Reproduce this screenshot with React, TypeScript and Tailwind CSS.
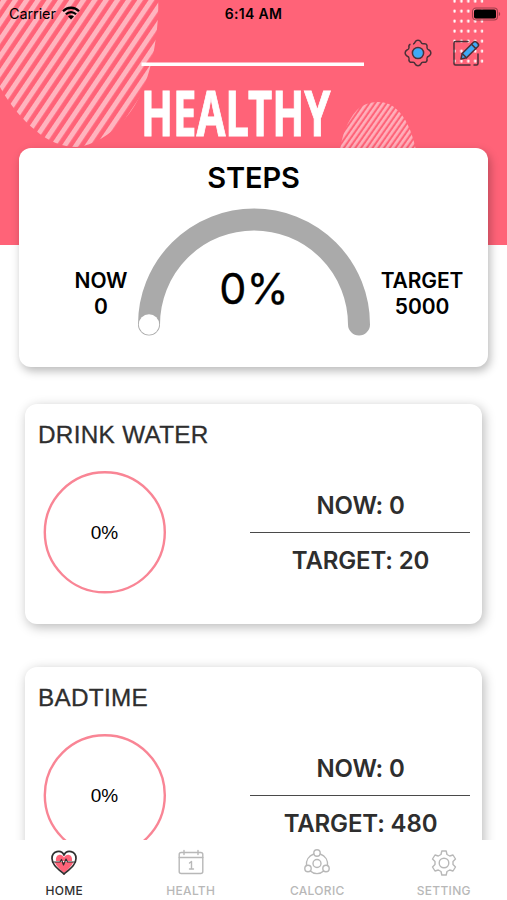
import type { ReactNode } from "react";

function HeaderArt() {
  return (
    <svg className="absolute left-0 top-0" width="507" height="245" viewBox="0 0 507 245" fill="none">
      <defs>
        <pattern id="wide" width="9.4" height="9.4" patternUnits="userSpaceOnUse" patternTransform="translate(61.5 146) rotate(34)">
          <rect width="4.9" height="9.4" fill="#ffb4be" />
        </pattern>
        <pattern id="thin" width="4.7" height="4.7" patternUnits="userSpaceOnUse" patternTransform="translate(345 148) rotate(35)">
          <rect width="2.6" height="4.7" fill="#ffb0bb" />
        </pattern>
        <pattern id="dots" x="452.8" y="-1" width="6.9" height="10" patternUnits="userSpaceOnUse">
          <rect x="0.6" y="0.6" width="2.2" height="3.2" rx="1" fill="#fff" />
        </pattern>
      </defs>
      <rect width="507" height="245" fill="#ff6378" />
      <path d="M-2 -2V83C7 102 22 119 35 130C49 142 63 147 76 147C94 146 110 134 123 121C141 102 149 76 154 50C157 34 159 13 158 -2Z" fill="url(#wide)" />
      <path d="M340 150C342 136 347 121 357 110C366 101 384 99 394 107C406 116 412 132 416 150Z" fill="url(#thin)" />
      <rect x="452.8" y="-1" width="30.6" height="66" fill="url(#dots)" />
      <path d="M141.500 64.300H364" stroke="#fff" strokeWidth="3.600" />
    </svg>
  );
}

function StatusBar() {
  return (
    <div className="flex h-7 shrink-0 items-center pl-[9px] pr-[6px] text-black">
      <div className="flex w-[160px] items-center gap-[7px]">
        <span className="text-[14.500px] tracking-[-0.100px]">Carrier</span>
        <svg className="-ml-px -mt-[2px]" width="18" height="14" viewBox="0 0 18 14" fill="none">
          <path d="M1 5.200C5.500 0.600 12.500 0.600 17 5.200" stroke="#000" strokeWidth="2.300" />
          <path d="M3.900 8.200C6.800 5.300 11.200 5.300 14.100 8.200" stroke="#000" strokeWidth="2.200" />
          <path d="M6 10.500C7.700 8.900 10.300 8.900 12 10.500L9 13.600Z" fill="#000" />
        </svg>
      </div>
      <span className="-mt-px flex-1 text-center text-[14px] font-semibold tracking-[0.300px]">6:14 AM</span>
      <div className="flex w-[163px] justify-end">
        <svg className="-mt-px" width="30" height="14" viewBox="0 0 30 14" fill="none">
          <rect x="1.500" y="1" width="25" height="12" rx="3.500" stroke="#a03e4b" strokeWidth="1.100" />
          <rect x="3" y="2.500" width="22" height="9" rx="1.800" fill="#000" />
          <path d="M27.800 5V9C29.600 8.500 29.600 5.500 27.800 5Z" fill="#a03e4b" />
        </svg>
      </div>
    </div>
  );
}

function HeaderActions() {
  return (
    <div className="flex h-[50px] shrink-0 items-center justify-end gap-[19px] pr-[26px]">
      <svg width="28" height="28" viewBox="0 0 28 28" fill="none" stroke="#4b3038" strokeWidth="1.500" strokeLinejoin="round">
        <path d="M6.500 5.200C5 5.600 4.600 6.800 5 8.600C5.100 10 4.200 10.500 3 11C0.500 12.300 0.500 15.700 3 17C4.200 17.500 5.100 18 5 19.400C4.500 22.500 6 23.800 8.800 23.200C10.200 23 10.700 23.800 11.100 24.900C12.200 27.300 15.800 27.300 16.900 24.900C17.300 23.800 17.800 23 19.200 23.200C22 23.800 23.500 22.500 23 19.400C22.900 18 23.800 17.500 25 17C27.500 15.700 27.500 12.300 25 11C23.800 10.500 22.900 10 23 8.600C23.500 5.500 22 4.200 19.200 4.800C17.800 5 17.300 4.200 16.900 3.100C15.800 0.700 12.200 0.700 11.100 3.100C10.700 4.200 10.200 5 9 4.900" />
        <circle cx="14" cy="14" r="5.600" fill="#3fa9f5" />
      </svg>
      <svg width="30" height="28" viewBox="0 0 30 28" fill="none" stroke="#4b3038" strokeWidth="1.500" strokeLinecap="round" strokeLinejoin="round">
        <path d="M17 2.500H4.500Q3 2.500 3 4V24.500Q3 26 4.500 26H19M23 26H25.500Q27 26 27 24.500V15" />
        <path d="M10 20L11.200 14.500L22.500 3.200Q24 1.700 25.500 3.200L26.900 4.600Q28.300 6 26.900 7.500L15.500 18.800Z" fill="#3fa9f5" />
        <path d="M20.500 5.200L24.900 9.600M11.200 14.500L15.500 18.800" />
      </svg>
    </div>
  );
}

function StepsCard() {
  return (
    <section className="mx-[19px] h-[219px] w-[469px] shrink-0 rounded-[12px] bg-white text-black shadow-[2px_4px_10px_rgba(0,0,0,0.28)]">
      <h2 className="pt-[12px] text-center text-[29px] font-semibold leading-[36px] tracking-[-0.100px]">STEPS</h2>
      <div className="flex pt-[12px]">
        <div className="w-[118px] pl-[46px] pt-[60px] text-center text-[21px] font-semibold leading-[26px] tracking-[-0.100px]">
          <div>NOW</div>
          <div>0</div>
        </div>
        <div className="grid w-[234px]">
          <svg className="col-start-1 row-start-1" width="234" height="130" viewBox="0 0 234 130" fill="none">
            <path d="M12 116.500A105 105 0 0 1 222 116.500" stroke="#aaa" strokeWidth="22" strokeLinecap="round" />
            <circle cx="12" cy="116.500" r="10.200" fill="#fff" />
          </svg>
          <span className="col-start-1 row-start-1 pt-[55px] text-center text-[43px] font-normal leading-[50px] [-webkit-text-stroke:0.300px_#000]">0%</span>
        </div>
        <div className="w-[102px] pt-[60px] text-center text-[21px] font-semibold leading-[26px] tracking-[-0.100px]">
          <div>TARGET</div>
          <div>5000</div>
        </div>
      </div>
    </section>
  );
}

function GoalCard({ title, now, target }: { title: string; now: number; target: number }) {
  return (
    <section className="mx-[25px] h-[220px] w-[457px] shrink-0 rounded-[12px] bg-white text-[#2e2e2e] shadow-[2px_3px_12px_rgba(0,0,0,0.28)]">
      <h2 className="pl-[13px] pt-[17px] font-['Liberation_Sans',sans-serif] text-[24.300px] leading-[28px] tracking-[0.300px] [-webkit-text-stroke:0.300px_#2e2e2e]">{title}</h2>
      <div className="flex pl-[18px] pt-[22px]">
        <div className="grid size-[123px] place-items-center font-['Liberation_Sans',sans-serif] text-[19px] text-black">
          <svg className="col-start-1 row-start-1" width="123" height="123" viewBox="0 0 123 123" fill="none">
            <circle cx="61.800" cy="61.300" r="60" stroke="#f98595" strokeWidth="2.400" />
          </svg>
          <span className="col-start-1 row-start-1 pt-px">0%</span>
        </div>
        <div className="ml-[84px] w-[220px] pt-[17px] text-center text-[24px] font-semibold leading-[36px] tracking-[-0.150px]">
          <div className="h-[45px] border-b border-[#4a4a4a] pl-px">NOW: {now}</div>
          <div className="pl-px pt-[10px]">TARGET: {target}</div>
        </div>
      </div>
    </section>
  );
}

function Tab({ label, active, children }: { label: string; active?: boolean; children: ReactNode }) {
  return (
    <div className={`flex flex-1 flex-col items-center pt-[8px] ${active ? "text-[#303030]" : "text-[#b8b8b8]"}`}>
      <svg width="30" height="30" viewBox="0 0 30 30" fill="none" stroke="currentColor" strokeWidth="1.400" strokeLinecap="round" strokeLinejoin="round">
        {children}
      </svg>
      <span className="mt-[5px] text-[12px] font-medium leading-[16px] tracking-[0.300px]">{label}</span>
    </div>
  );
}

export default function App() {
  return (
    <div className="relative flex h-[900px] w-[507px] flex-col overflow-hidden bg-white font-['Inter','Liberation_Sans',sans-serif]">
      <HeaderArt />
      <main className="relative flex min-h-0 flex-1 flex-col overflow-hidden">
        <StatusBar />
        <HeaderActions />
        <h1 className="ml-[141px] h-[70px] shrink-0 origin-left scale-x-[0.665] pt-[2px] font-['Noto_Sans',sans-serif] text-[63px] font-bold leading-[64px] text-white [-webkit-text-stroke:1px_#fff]">HEALTHY</h1>
        <StepsCard />
        <div className="flex shrink-0 flex-col gap-[43px] pt-[37px]">
          <GoalCard title="DRINK WATER" now={0} target={20} />
          <GoalCard title="BADTIME" now={0} target={480} />
        </div>
      </main>
      <nav className="relative flex h-[60px] shrink-0 bg-white pl-px">
        <Tab label="HOME" active>
          <path d="M5.500 14H24.500C22.500 18.500 18.500 22 15 25C11.500 22 7.500 18.500 5.500 14Z" fill="#ff6378" stroke="none" />
          <path d="M7 13C6 6 13 5 15 9.500C17 5 24 6 23 13Z" fill="#ff6378" stroke="none" />
          <path d="M15 26C8 20 3 16.500 3 10.500C3 3 12 1 15 7C18 1 27 3 27 10.500C27 16.500 22 20 15 26Z" strokeWidth="1.700" />
          <path d="M3.500 14H11L12.500 11.500L14.500 17L17 11L18.500 14H26.500" strokeWidth="1.200" />
        </Tab>
        <Tab label="HEALTH">
          <rect x="3.200" y="4.500" width="23.600" height="21" rx="2" />
          <path d="M3.200 9.500H26.800M8 2.500V6.500M22 2.500V6.500M13.500 15L15.500 13.500V21M13.500 21H17.500" />
        </Tab>
        <Tab label="CALORIC">
          <circle cx="15" cy="5" r="3.200" />
          <circle cx="6" cy="20.500" r="3.200" />
          <circle cx="24" cy="20.500" r="3.200" />
          <circle cx="15" cy="15.500" r="4" />
          <path d="M11.800 6C6.500 7.800 4 12.500 4.500 17.500M18.200 6C23.500 7.800 26 12.500 25.500 17.500M8.300 23C12 26.500 18 26.500 21.700 23" />
        </Tab>
        <Tab label="SETTING">
          <circle cx="15" cy="15" r="4.800" />
          <path d="M12.800 3H17.200L18 6.500L20.700 8L24 7L26.500 11L24 13.500V16.500L26.500 19L24 23L20.700 22L18 23.500L17.200 27H12.800L12 23.500L9.300 22L6 23L3.500 19L6 16.500V13.500L3.500 11L6 7L9.300 8L12 6.500Z" />
        </Tab>
      </nav>
    </div>
  );
}
